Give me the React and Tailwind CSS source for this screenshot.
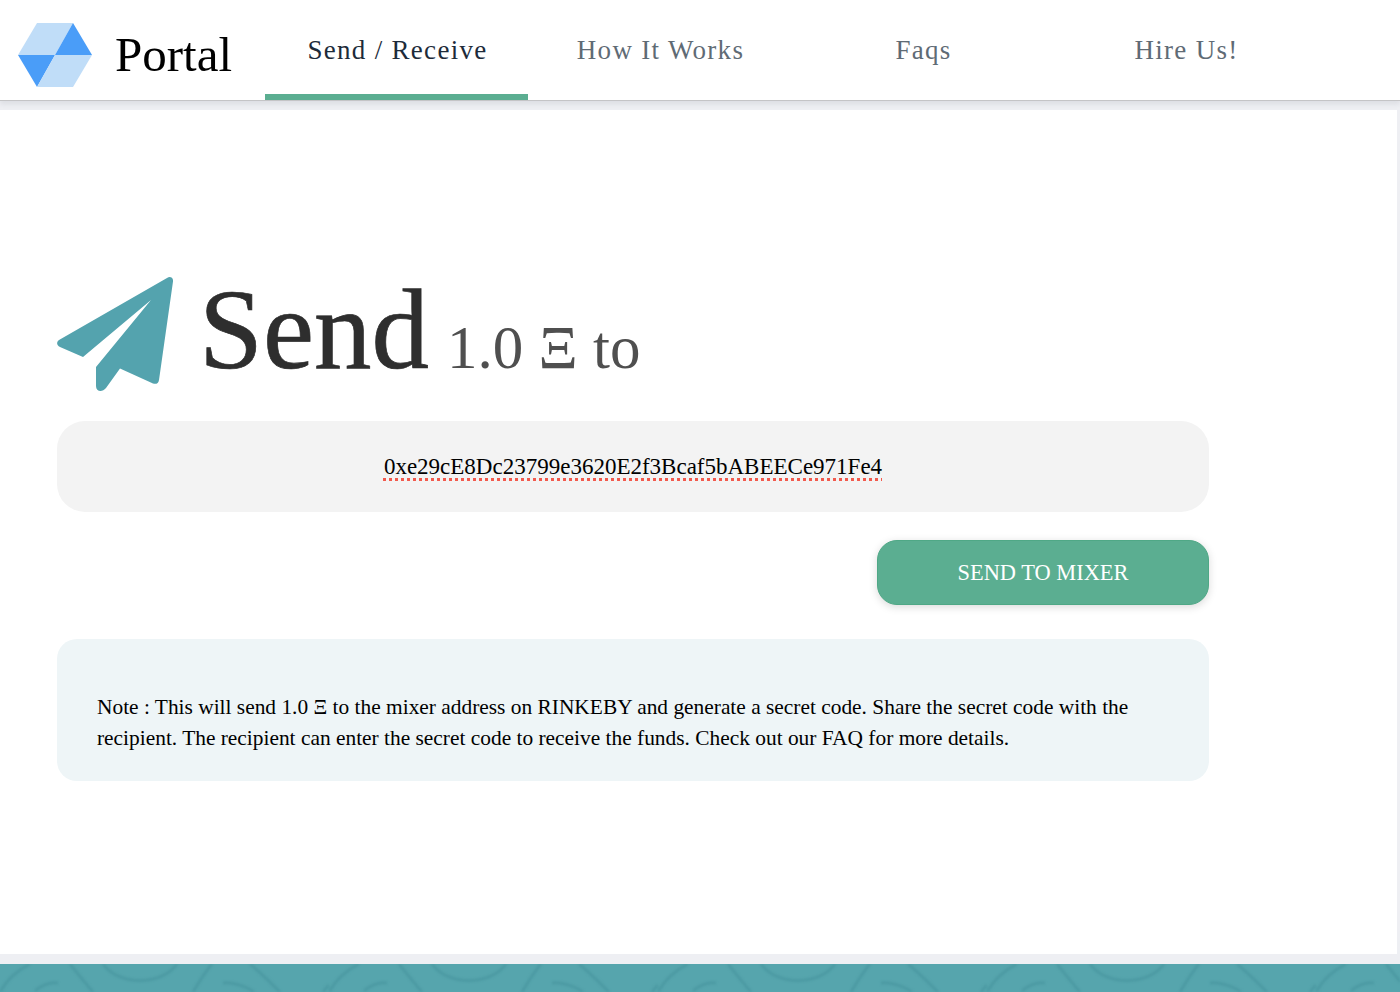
import React from "react";

const serif = "font-['Liberation_Serif','Times_New_Roman',serif]";

const tabs = ["Send / Receive", "How It Works", "Faqs", "Hire Us!"];

const Logo = () => (
  <svg width="76" height="64" viewBox="0 0 76 64" className="shrink-0">
    <polygon points="20,0 56,0 38,32 1,32" fill="#c0ddf8" />
    <polygon points="56,0 75,32 38,32" fill="#4a9df8" />
    <polygon points="1,32 38,32 20,64" fill="#4a9df8" />
    <polygon points="38,32 75,32 56,64 20,64" fill="#c0ddf8" />
  </svg>
);

const PlaneIcon = () => (
  <svg width="116" height="116" viewBox="0 0 116 116" className="shrink-0">
    <path
      d="M110 2 C113 0 116.5 1.5 116 5.5 L102 104 C101.5 107.5 99 108.5 96 107.5 L63 92.5 L49 112 C45 117 39 115.5 39 110 L39 91 L94 24 L26 81 L3 71 C-0.5 69.5 -0.8 66 2 64 Z"
      fill="#54a3ae"
    />
  </svg>
);

// soft repeating curves on the footer strip
const FooterPattern = () => (
  <svg className="absolute inset-0 h-full w-full blur-[1px]" fill="none">
    <defs>
      <pattern id="waves" x="0" y="0" width="329" height="28" patternUnits="userSpaceOnUse">
        <g stroke="#4c9aa3" strokeWidth="3" fill="none">
          <path d="M0 28 C8 14 18 6 30 0" />
          <path d="M35 27 C42 21 50 18 58 19" />
          <path d="M70 0 C78 10 86 20 93 28" />
          <path d="M103 0 C118 22 162 22 177 0" />
          <path d="M193 28 C199 18 205 8 212 0" />
          <path d="M223 19 C232 18 246 22 254 28" />
          <path d="M250 0 C260 8 270 18 280 28" />
          <path d="M323 28 C325 25 327 23 329 21" />
        </g>
      </pattern>
    </defs>
    <rect width="100%" height="100%" fill="url(#waves)" />
  </svg>
);

const App = () => {
  return (
    <div className={`flex h-[992px] w-[1400px] flex-col overflow-hidden bg-[#eeeff3] ${serif}`}>
      {/* Header */}
      <header className="relative flex h-[101px] shrink-0 items-stretch border-b border-[#c4c4c6] bg-white shadow-[0_3px_5px_rgba(60,70,90,0.1)]">
        <div className="flex w-[265px] items-center pt-[9px] pl-[17px]">
          <Logo />
          <span className="ml-[22px] text-[49px] leading-none text-black">Portal</span>
        </div>
        {tabs.map((tab, i) => (
          <div
            key={tab}
            className={`flex w-[263px] justify-center pt-[33px] pl-[2px] text-[27px] leading-[34px] tracking-[1.3px] ${
              i === 0
                ? "border-b-[6px] border-[#5bae91] text-[#1d2b3a]"
                : "text-[#5f6b75]"
            }`}
          >
            {tab}
          </div>
        ))}
      </header>

      {/* Main panel */}
      <main className="mt-[9px] mr-[3px] h-[844px] shrink-0 bg-white pt-[166px] pl-[57px]">
        <div className="w-[1152px]">
          <div className="flex h-[116px] items-center">
            <PlaneIcon />
            <h1 className="ml-[26px] mt-[-8px] flex items-baseline whitespace-nowrap text-[#2e2e2e]">
              <span className="text-[115px] leading-[116px] [-webkit-text-stroke:0.7px_#2e2e2e]">Send</span>
              <span className="ml-[18px] text-[61px] leading-none text-[#4f4f4f]">1.0 Ξ to</span>
            </h1>
          </div>

          <div className="mt-[29px] flex h-[91px] items-center justify-center rounded-[28px] bg-[#f3f3f3]">
            <span className="text-[23px] leading-none text-black underline decoration-[#f25a4d] decoration-dotted decoration-[3px] underline-offset-[4px]">
              0xe29cE8Dc23799e3620E2f3Bcaf5bABEECe971Fe4
            </span>
          </div>

          <div className="mt-[28px] flex justify-end">
            <button className="h-[65px] w-[332px] rounded-[20px] border border-[#4fa886] bg-[#5bae91] text-[22.4px] text-white shadow-[0_2px_8px_rgba(0,0,0,0.15)]">
              SEND TO MIXER
            </button>
          </div>

          <div className="mt-[34px] h-[142px] rounded-[20px] bg-[#eef5f7] px-[40px] pt-[53px] text-[21.4px] leading-[31px] text-black">
            Note : This will send 1.0 Ξ to the mixer address on RINKEBY and generate a secret code. Share the secret code with the recipient. The recipient can enter the secret code to receive the funds. Check out our FAQ for more details.
          </div>
        </div>
      </main>

      {/* Footer */}
      <footer className="relative mt-[10px] flex-1 overflow-hidden bg-[#56a5ad]">
        <FooterPattern />
      </footer>
    </div>
  );
};

export default App;
